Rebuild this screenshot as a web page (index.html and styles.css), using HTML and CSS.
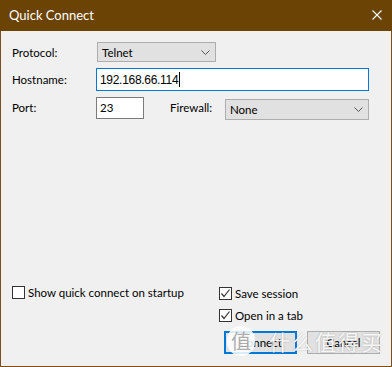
FILE: index.html
```html
<!DOCTYPE html>
<html lang="en">
<head>
    <meta charset="UTF-8">
    <title>Quick Connect</title>
    <link rel="stylesheet" href="styles.css">
</head>
<body>
    <div class="window">
        <div class="titlebar">
            <span class="title">Quick Connect</span>
            <svg class="close" width="10" height="10" viewBox="0 0 10 10">
                <path d="M0.5 0.5 L9.5 9.5 M9.5 0.5 L0.5 9.5" stroke="#fff" stroke-width="1.1" fill="none"/>
            </svg>
        </div>

        <div class="content">
            <div class="row row-protocol">
                <span class="label">Protocol:</span>
                <div class="select select-protocol">
                    <span>Telnet</span>
                    <svg class="chevron" width="9" height="5" viewBox="0 0 9 5"><path d="M0.5 0.5 L4.5 4.5 L8.5 0.5" stroke="#555" fill="none"/></svg>
                </div>
            </div>

            <div class="row row-host">
                <span class="label">Hostname:</span>
                <div class="input input-host"><span class="host-text">192.168.66.114</span><span class="caret"></span></div>
            </div>

            <div class="row row-port">
                <span class="label">Port:</span>
                <div class="input input-port"><span>23</span></div>
                <span class="label label-firewall">Firewall:</span>
                <div class="select select-firewall">
                    <span>None</span>
                    <svg class="chevron" width="9" height="5" viewBox="0 0 9 5"><path d="M0.5 0.5 L4.5 4.5 L8.5 0.5" stroke="#555" fill="none"/></svg>
                </div>
            </div>

            <div class="spacer"></div>

            <div class="bottom">
                <div class="left-col">
                    <label class="check"><span class="box"></span>Show quick connect on startup</label>
                </div>
                <div class="right-col">
                    <label class="check"><span class="box checked"><svg width="11" height="11" viewBox="0 0 11 11"><path d="M1.5 5.5 L4 8.5 L9.5 1.5" stroke="#333" stroke-width="1.2" fill="none"/></svg></span>Save session</label>
                    <label class="check"><span class="box checked"><svg width="11" height="11" viewBox="0 0 11 11"><path d="M1.5 5.5 L4 8.5 L9.5 1.5" stroke="#333" stroke-width="1.2" fill="none"/></svg></span>Open in a tab</label>
                </div>
            </div>

            <div class="buttons">
                <button class="btn btn-default">Connect</button>
                <button class="btn">Cancel</button>
            </div>
        </div>

        <div class="watermark">
            <span class="wm-logo">值</span>
            <span class="wm-text">什么值得买</span>
        </div>
    </div>
</body>
</html>
```

FILE: styles.css
```css
* {
    box-sizing: border-box;
    margin: 0;
    padding: 0;
}

body {
    font-family: Lato, "Liberation Sans", sans-serif;
    font-size: 11.5px;
    color: #000;
    background: #f0f0f0;
}

.window {
    position: relative;
    width: 392px;
    height: 367px;
    display: flex;
    flex-direction: column;
    border: 1px solid #7b4f1a;
    border-top: none;
    background: #f0f0f0;
}

.titlebar {
    height: 31px;
    margin: 0 -1px;
    background: #6b4304;
    display: flex;
    align-items: center;
    justify-content: space-between;
    padding: 0 10px 1px 9px;
}

.title {
    color: #fff;
    font-size: 13px;
}

.content {
    flex: 1;
    display: flex;
    flex-direction: column;
    padding: 11px 0 12px 11px;
}

.row {
    display: flex;
    align-items: center;
}

.label {
    width: 84px;
    flex-shrink: 0;
}

.row-host {
    margin-top: 6px;
}

.row-port {
    margin-top: 6px;
    align-items: flex-start;
}

.row-port .label {
    margin-top: 4px;
}

.select {
    height: 20px;
    border: 1px solid #adadad;
    background: #e1e1e1;
    display: flex;
    align-items: center;
    justify-content: space-between;
    padding: 0 5px 0 4px;
}

.select-protocol {
    width: 119px;
    margin-left: 1px;
}

.select-firewall {
    width: 144px;
    height: 21px;
    margin-top: 2px;
}

.input {
    background: #fff;
    border: 1px solid #7a7a7a;
    display: flex;
    align-items: center;
    padding: 0 3px;
}

.input-host {
    width: 273px;
    height: 23px;
    border-color: #0078d7;
}

.host-text {
    font-family: "Liberation Sans", sans-serif;
    font-size: 12px;
    letter-spacing: -0.3px;
}

.input-port {
    width: 48px;
    height: 22px;
    align-items: flex-start;
    padding-top: 3px;
}

.caret {
    width: 1px;
    height: 15px;
    margin-left: 1px;
    background: #000;
}

.label-firewall {
    width: 55px;
    margin-left: 26px;
}

.spacer {
    flex: 1;
}

.bottom {
    display: flex;
    align-items: flex-start;
}

.left-col {
    width: 207px;
    margin-top: -1px;
}

.right-col {
    display: flex;
    flex-direction: column;
    gap: 9px;
}

.check {
    display: flex;
    align-items: center;
    height: 13px;
}

.box {
    width: 13px;
    height: 13px;
    border: 1px solid #333;
    background: #fff;
    margin-right: 3px;
    display: flex;
    align-items: center;
    justify-content: center;
}

.buttons {
    display: flex;
    gap: 10px;
    margin-top: 9px;
    padding-left: 212px;
}

.btn {
    width: 73px;
    height: 23px;
    font-family: inherit;
    font-size: 11.5px;
    border: 1px solid #adadad;
    background: #e1e1e1;
    color: #000;
}

.btn-default {
    border: 2px solid #0078d7;
}

.watermark {
    position: absolute;
    left: 226px;
    top: 326px;
    display: flex;
    align-items: center;
    gap: 14px;
    font-family: "Noto Sans CJK SC", sans-serif;
    color: rgba(255, 255, 255, 0.9);
    text-shadow: 0 0 2px rgba(0, 0, 0, 0.25);
    pointer-events: none;
}

.wm-logo {
    width: 28px;
    height: 30px;
    border-radius: 14px;
    background: rgba(255, 255, 255, 0.85);
    color: rgba(120, 120, 120, 0.6);
    font-size: 20px;
    line-height: 30px;
    text-align: center;
    text-shadow: none;
}

.wm-text {
    font-size: 21px;
    letter-spacing: 2px;
}
```
